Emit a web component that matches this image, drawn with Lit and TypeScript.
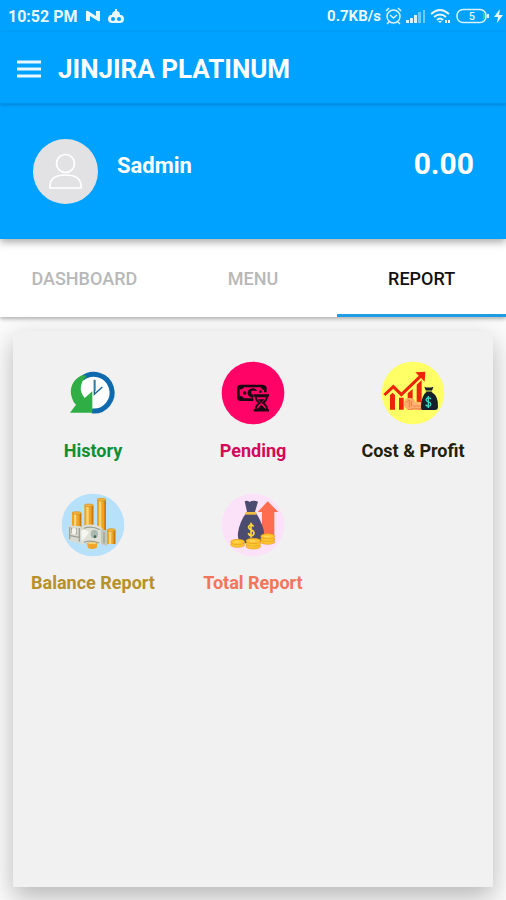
import { LitElement, html, css, svg } from "lit";
import { customElement, state } from "lit/decorators.js";
import { classMap } from "lit/directives/class-map.js";

const history = svg`
  <circle cx="137" cy="115" r="52" fill="#fff"/>
  <path d="M98 72 A55 55 0 1 1 128 169" fill="none" stroke="#0e69ae" stroke-width="15"/>
  <path d="M98 62 C70 74 58 103 68 130 Q71 143 80 150 L62 174 L129 174 V110 L106 130 Q91 112 95 94 Q98 76 113 63 Z" fill="#2fae45"/>
  <path d="M135 75 V119 L159 97" fill="none" stroke="#135e94" stroke-width="4"/>
  <path d="M138 76 V110" stroke="#7da6c4" stroke-width="4"/>`;

const pending = svg`
  <circle cx="131" cy="115" r="94" fill="#ff0366"/>
  <path d="M132 135 H94 Q87 135 87 128 V102 Q87 94 95 94 H158 Q168 94 168 102 V113" fill="none" stroke="#1b0712" stroke-width="8"/>
  <path d="M90 94 H106 Q103 103 91 105 Z M90 123 Q104 125 106 135 H90 Z M153 94 H168 V108 Q156 106 153 94 Z M131 101 Q112 103 115 119 Q117 128 132 130 V119 H126 V108 H144 Q139 101 131 101 Z" fill="#1b0712"/>
  <circle cx="106" cy="115" r="5" fill="#1b0712"/><circle cx="153" cy="111" r="4" fill="#1b0712"/>
  <path d="M133 122 H179 M133 167 H179" stroke="#1b0712" stroke-width="7"/>
  <path d="M139 125 Q139 137 151 145 Q139 153 139 165 H173 Q173 153 161 145 Q173 137 173 125 Z" fill="#ff0366" stroke="#1b0712" stroke-width="6"/>
  <path d="M146 134 H166 L156 144 Z M144 163 L156 150 L168 163 Z" fill="#1b0712"/>`;

const cost = svg`
  <circle cx="131" cy="115" r="94" fill="#ffff66"/>
  <path d="M62 121 L70 114 L77 121 V165 H62 Z M89 129 H103 V165 H89 Z M115 116 L130 103 V165 H115 Z M142 90 L157 76 V165 H142 Z" fill="#ec240b"/>
  <path d="M45 121 L72 96 L96 120 L153 65" fill="none" stroke="#ec240b" stroke-width="9"/>
  <path d="M138 53 L168 51 L166 81 Z" fill="#ec240b"/>
  <circle cx="121" cy="147" r="18" fill="#ffac6c"/>
  <path d="M111 143 L120 136 V158 M126 138 V158" fill="none" stroke="#e58342" stroke-width="3"/>
  <ellipse cx="146" cy="148" rx="15" ry="7" fill="#ffb778"/><ellipse cx="143" cy="158" rx="18" ry="8" fill="#ffac6c"/>
  <path d="M131 154 H157 M128 162 H155" stroke="#dd803d" stroke-width="2"/>
  <path d="M165 96 Q178 101 192 96 L187 112 Q208 125 206 158 Q205 166 197 166 H162 Q154 166 155 156 Q156 123 171 112 Z" fill="#15202d"/>
  <path d="M168 109 H189" stroke="#e9f05a" stroke-width="3"/>
  <path d="M185 133 Q181 128 174 130 Q168 134 172 139 L182 144 Q187 150 181 154 Q173 157 169 150 M177 124 V160" fill="none" stroke="#3ed7c6" stroke-width="4"/>`;

const coinStack = (x: number, y: number, h: number, w = 24) => svg`
  <rect x=${x} y=${y} width=${w} height=${h} fill="#eda323"/>
  <rect x=${x + 6} y=${y} width="7" height=${h} fill="#ffd77a"/>
  <rect x=${x + w - 5} y=${y} width="5" height=${h} fill="#c87812"/>
  <ellipse cx=${x + w / 2} cy=${y} rx=${w / 2} ry="4" fill="#f5b53c" stroke="#d28e1e" stroke-width="2"/>`;

const balance = svg`
  <circle cx="131" cy="115" r="94" fill="#b7e0fb"/>
  ${coinStack(68, 79, 50, 28)}${coinStack(105, 56, 80, 27)}${coinStack(143, 39, 100, 27)}
  <path d="M57 116 L95 119 V172 L59 161 Z" fill="#d9dacf"/>
  <path d="M96 121 Q124 105 159 124 V174 Q126 160 96 174 Z" fill="#dfe1d7"/>
  <path d="M154 126 L174 132 V178 L155 172 Z" fill="#c3c7b9"/>
  <path d="M61 121 V158 M67 123 V139 M81 125 V143 M60 146 L92 153 M90 124 V165 M103 125 Q127 116 151 129 M104 167 Q124 159 150 169 M164 137 V170" fill="none" stroke="#9da194" stroke-width="4"/>
  <ellipse cx="74" cy="134" rx="7" ry="10" fill="#f4f3e9"/>
  <path d="M96 132 Q108 125 119 137 Q109 155 97 163 Z" fill="#f6f6f1"/>
  <ellipse cx="135" cy="142" rx="11" ry="13" fill="#aab9ad"/><circle cx="137" cy="150" r="4" fill="#3f6657"/>
  ${coinStack(173, 130, 42, 25)}
  <path d="M113 170 Q128 163 144 170 L142 184 Q128 190 116 184 Z" fill="#f0a62a"/>
  <path d="M118 171 Q128 167 139 171" fill="none" stroke="#ffd77a" stroke-width="4"/>`;

const coins = (x: number, y: number, n: number, rx = 21) => svg`
  ${Array.from({ length: n }, (_, i) => svg`
    <ellipse cx=${x} cy=${y - 8 * i} rx=${rx} ry="8" fill="#ffc52e" stroke="#e69b16" stroke-width="2"/>
    <path d=${`M${x - 10} ${y - 8 * i}h15`} stroke="#ffe174" stroke-width="3"/>`)}`;

const total = svg`
  <circle cx="131" cy="115" r="94" fill="#fce2f8"/>
  <path d="M175 44 L207 76 H195 V170 H158 V76 H145 Z" fill="#ff6c50"/>
  <path d="M106 44 Q114 40 121 46 Q130 39 146 45 L137 75 Q155 99 163 130 Q168 163 148 170 H101 Q83 165 86 139 Q90 105 113 75 Z" fill="#4b4c70"/>
  <path d="M108 80 H141" stroke="#f3bf42" stroke-width="8"/>
  <path d="M133 120 Q128 112 121 116 Q114 121 121 127 L130 132 Q138 140 130 146 Q120 149 117 139 M125 108 V153" fill="none" stroke="#ffd641" stroke-width="5"/>
  ${coins(175, 165, 3)}${coins(85, 174, 2)}${coins(132, 179, 3, 22)}`;

const reports = [
  { label: "History", tone: "green", art: history },
  { label: "Pending", tone: "crimson", art: pending },
  { label: "Cost & Profit", tone: "ink", art: cost },
  { label: "Balance Report", tone: "gold", art: balance },
  { label: "Total Report", tone: "coral", art: total },
];

@customElement("app-root")
export class AppRoot extends LitElement {
  @state() private tab = "REPORT";

  static styles = css`
    :host {
      display: flex;
      flex-direction: column;
      min-height: 100vh;
      box-sizing: border-box;
      overflow: hidden;
      background: #fbfbfb;
      font-family: Roboto, "Noto Sans", sans-serif;
    }
    * { box-sizing: border-box; }
    button { border: 0; padding: 0; background: none; font: inherit; cursor: pointer; }
    svg { display: block; flex: none; }
    .status {
      display: flex;
      align-items: center;
      height: 32px;
      padding: 0 3px 0 8px;
      background: #00a2ff;
      color: #e9f8ff;
      font-size: 16px;
      font-weight: 700;
    }
    .notices { display: flex; align-items: center; gap: 8px; }
    .system { display: flex; align-items: center; gap: 4px; margin-left: auto; font-size: 15px; }
    .bar {
      display: flex;
      align-items: center;
      gap: 16px;
      height: 72px;
      padding: 2px 16px 0;
      background: #00a2ff;
      color: #fff;
      border-bottom: 1px solid #0095eb;
      box-shadow: 0 1px 3px rgba(0, 60, 120, 0.3);
      z-index: 2;
    }
    .menu { color: #e9f8ff; }
    h1 { margin: 0; font-size: 26px; line-height: 32px; font-weight: 700; }
    .profile {
      display: flex;
      align-items: center;
      height: 135px;
      padding: 0 32px;
      background: #00a2ff;
      color: #fff;
      box-shadow: 0 3px 8px rgba(0, 0, 0, 0.35);
      z-index: 1;
    }
    .who { margin: 0 auto 12px 18px; font-size: 22px; line-height: 24px; font-weight: 700; }
    .amount { margin-bottom: 16px; font-size: 30px; line-height: 32px; font-weight: 700; }
    .tabs {
      display: grid;
      grid-template-columns: repeat(3, 1fr);
      height: 78px;
      background: #fff;
      box-shadow: 0 2px 4px rgba(0, 0, 0, 0.3);
      z-index: 0;
    }
    .tab {
      padding-top: 4px;
      border-bottom: 3px solid transparent;
      color: #b8b8b8;
      font-size: 18px;
      font-weight: 500;
    }
    .tab.on { color: #111; border-color: #1e9ce6; }
    .card {
      flex: 1;
      display: grid;
      grid-template-columns: repeat(3, 1fr);
      grid-auto-rows: 132px;
      margin: 14px 13px 13px;
      padding-top: 30px;
      background: #f1f1f1;
      box-shadow: 0 10px 24px rgba(0, 0, 0, 0.27);
    }
    .report {
      display: flex;
      flex-direction: column;
      align-items: center;
      gap: 14px;
      font-size: 18px;
      line-height: 24px;
      font-weight: 700;
      white-space: nowrap;
    }
    .green { color: #0e9032; }
    .crimson { color: #d3095b; }
    .ink { color: #1f220b; }
    .gold { color: #b8902a; }
    .coral { color: #f5745c; }
  `;

  render() {
    return html`
      <div class="status">
        <div class="notices">
          <span>10:52 PM</span>
          <svg width="14" height="12" viewBox="0 0 14 12" fill="#e9f8ff"><path d="M0 11V2q0-2 2-1l8 5V1h4v9q0 2-2 1L4 6v5z"/></svg>
          <svg width="16" height="16" viewBox="0 0 16 16"><path d="M8 1v4M2 8h12" stroke="#e9f8ff" stroke-width="2"/><path d="M4 7Q4 3 8 3t4 4v2H4zM0 11q0-4 4-4h8q4 0 4 4t-4 4H4q-4 0-4-4z" fill="#e9f8ff"/><circle cx="5" cy="11" r="2" fill="#00a2ff"/><circle cx="11" cy="11" r="2" fill="#00a2ff"/></svg>
        </div>
        <div class="system">
          <span>0.7KB/s</span>
          <svg width="17" height="18" viewBox="0 0 17 18" fill="none" stroke="#d9f2ff" stroke-width="1.5"><circle cx="8.5" cy="9.5" r="6.5"/><path d="M5 8l3.500 3L12 8M1 4l3-3M16 4l-3-3M4 15l-2 2M13 15l2 2"/></svg>
          <svg width="20" height="15" viewBox="0 0 20 15"><path d="M0 14v-3h3v3zM4 14V9h3v5zM8 14V6h3v8z" fill="#d9f2ff"/><path d="M12 14V3h3v11zM17 14V1h2v13z" fill="#6ccaff"/></svg>
          <svg width="22" height="16" viewBox="0 0 22 16"><g fill="none" stroke="#e9f8ff" stroke-width="2"><path d="M1 6q9-8 18 0M4 9q6-5 12 0M7 12q3-3 6 0"/></g><path d="M8 13l2 2 2-2zM15 12h2v3h-2zM18 12h2v3h-2z" fill="#e9f8ff"/></svg>
          <svg width="34" height="16" viewBox="0 0 34 16"><rect x="1" y="1.500" width="29" height="13" rx="6" fill="none" stroke="#d9f2ff" stroke-width="1.500"/><path d="M28 5v6" stroke="#38c987" stroke-width="2"/><path d="M32 6v4" stroke="#d9f2ff" stroke-width="2"/><text x="16" y="12" text-anchor="middle" font-size="11" font-weight="500" fill="#e9f8ff">5</text></svg>
          <svg width="9" height="14" viewBox="0 0 9 14"><path d="M6 0L0 8h4l-1 6 6-8H5z" fill="#e9f8ff"/></svg>
        </div>
      </div>
      <header class="bar">
        <button class="menu" aria-label="Open menu">
          <svg width="26" height="18" viewBox="0 0 26 18" stroke="currentColor" stroke-width="3"><path d="M1 2h24M1 9h24M1 16h24"/></svg>
        </button>
        <h1>JINJIRA PLATINUM</h1>
      </header>
      <section class="profile">
        <svg width="67" height="67" viewBox="0 0 67 67"><circle cx="33.500" cy="33.500" r="32.500" fill="#e2e2e4"/><g fill="none" stroke="#fff" stroke-width="1.700"><circle cx="33.500" cy="25.500" r="9"/><path d="M18 50v-3q1-10 15.500-10T49 47v3z" stroke-linejoin="round"/></g></svg>
        <div class="who">Sadmin</div>
        <div class="amount">0.00</div>
      </section>
      <nav class="tabs" role="tablist">
        ${["DASHBOARD", "MENU", "REPORT"].map((name) => html`
          <button role="tab" class=${classMap({ tab: true, on: this.tab === name })}
            aria-selected=${this.tab === name} @click=${() => (this.tab = name)}>${name}</button>`)}
      </nav>
      <main class="card">
        ${reports.map((r) => html`
          <button class="report ${r.tone}">
            <svg width="64" height="64" viewBox="35 19 192 192">${r.art}</svg>
            <span>${r.label}</span>
          </button>`)}
      </main>
    `;
  }
}
